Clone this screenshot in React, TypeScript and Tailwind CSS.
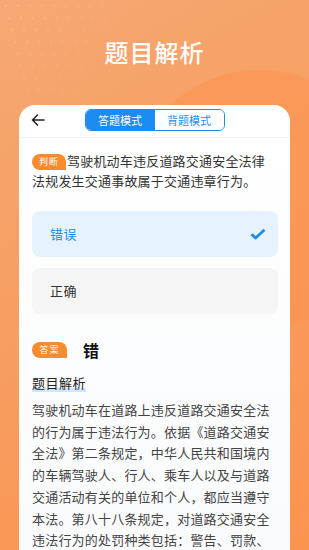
export default function App() {
  return (
    <main className="relative h-[550px] w-[309px] overflow-hidden bg-[linear-gradient(150deg,#f6a874,#f79c5e_55%,#fb944f)] font-['Noto_Sans_CJK_SC','Noto_Sans',sans-serif]">
      {/* decoration */}
      <svg className="absolute left-0 top-0" width="150" height="100" viewBox="0 0 150 100">
        {Array.from({ length: 8 }).map((_, r) =>
          Array.from({ length: 12 }).map((_, c) => (
            <circle
              key={`${r}-${c}`}
              cx={c * 12 + 6 + r * 3}
              cy={r * 12 + 6}
              r={1.6}
              fill="#ffffff"
              opacity={Math.max(0, 0.14 - (r + c) * 0.01)}
            />
          ))
        )}
      </svg>
      <div className="absolute -right-[80px] top-[70px] h-[260px] w-[260px] rounded-full bg-[#fb9550] opacity-60" />

      <div className="relative flex h-[105px] items-center justify-center pb-[1px]">
        <h1 className="text-[24px] font-medium tracking-[1px] text-white">题目解析</h1>
      </div>

      <div className="relative mx-[19px] h-[460px] rounded-t-[16px] bg-[linear-gradient(180deg,#ffffff,#fafbfd)]">
        <div className="relative flex h-[33px] items-start justify-center border-b border-[#f2f2f2] pt-[4px]">
          <svg className="absolute left-[12px] top-[9px]" width="14" height="12" viewBox="0 0 14 12" fill="none">
            <path d="M13 6H1.5M6.5 1L1.5 6l5 5" stroke="#222" strokeWidth="1.6" strokeLinecap="round" strokeLinejoin="round" />
          </svg>
          <div className="flex h-[22px] overflow-hidden rounded-[6px] border border-[#1c8bf2] text-[11px]">
            <div className="flex w-[69px] items-center justify-center bg-[#1c8bf2] text-white">答题模式</div>
            <div className="flex w-[69px] items-center justify-center bg-white text-[#1c8bf2]">背题模式</div>
          </div>
        </div>

        <div className="px-[13px] pr-[12px]">
          <p className="mt-[13px] text-[13px] leading-[20px] tracking-[0.2px] text-[#333]">
            <span className="mr-[1px] inline-flex h-[16px] w-[34px] items-center justify-center rounded-l-full rounded-tr-full rounded-br-[5px] bg-[#f98a2e] align-[1px] text-[9px] tracking-[1px] text-white">
              判断
            </span>
            驾驶机动车违反道路交通安全法律
            <br />
            法规发生交通事故属于交通违章行为。
          </p>

          <div className="mt-[20px] flex flex-col gap-[11px]">
            <div className="flex h-[46px] items-center justify-between rounded-[8px] bg-[#e6f3ff] pl-[18px] pr-[12px]">
              <span className="text-[13px] tracking-[0.5px] text-[#1c8bf2]">错误</span>
              <svg width="16" height="12" viewBox="0 0 16 12">
                <path d="M1.5 6.2L5.6 10 14.5 1.8" fill="none" stroke="#1c8bf2" strokeWidth="2.8" strokeLinejoin="round" />
              </svg>
            </div>
            <div className="flex h-[46px] items-center rounded-[8px] bg-[#f5f5f5] pl-[18px]">
              <span className="text-[13px] tracking-[0.5px] text-[#333]">正确</span>
            </div>
          </div>

          <div className="mt-[26px] flex h-[20px] items-center">
            <span className="inline-flex h-[16px] w-[35px] items-center justify-center rounded-l-full rounded-tr-full rounded-br-[5px] bg-[#f98a2e] text-[9px] tracking-[1px] text-white">
              答案
            </span>
            <span className="ml-[16px] text-[16px] font-bold text-[#111]">错</span>
          </div>

          <div className="mt-[9px]">
            <span className="relative inline-block text-[13px] leading-[20px] tracking-[0.5px] text-[#222]">
              <span className="absolute bottom-[1px] left-0 right-0 h-[4px] bg-[#cfe6fb]" />
              <span className="relative">题目解析</span>
            </span>
          </div>

          <p className="mt-[6px] text-[13px] leading-[21.7px] tracking-[0.2px] text-[#444]">
            驾驶机动车在道路上违反道路交通安全法的行为属于违法行为。依据《道路交通安全法》第二条规定，中华人民共和国境内的车辆驾驶人、行人、乘车人以及与道路交通活动有关的单位和个人，都应当遵守本法。第八十八条规定，对道路交通安全违法行为的处罚种类包括：警告、罚款、暂扣或者吊销机动车驾驶证、拘留。
          </p>
        </div>
      </div>
    </main>
  );
}
